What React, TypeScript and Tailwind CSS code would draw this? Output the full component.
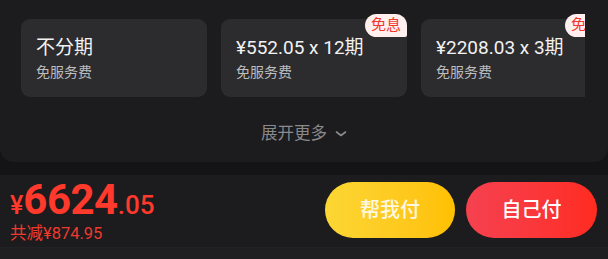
import React from 'react';

interface PlanOption {
  title: string;
  sub: string;
  badge?: string;
}

const plans: PlanOption[] = [
  { title: '不分期', sub: '免服务费' },
  { title: '¥552.05 x 12期', sub: '免服务费', badge: '免息' },
  { title: '¥2208.03 x 3期', sub: '免服务费', badge: '免息' },
];

const font = { fontFamily: 'Roboto, "Noto Sans CJK SC", sans-serif' };

const PlanCard: React.FC<{ plan: PlanOption }> = ({ plan }) => (
  <div className="relative shrink-0 w-[186px] h-[78px] rounded-[9px] bg-[#2c2b2d] pl-[15px] pt-[16px]">
    <div className="text-[19px] leading-[26px] text-[#f2f2f2]">{plan.title}</div>
    <div className="mt-[2px] text-[14px] leading-[18px] text-[#bdbdbd]">{plan.sub}</div>
    {plan.badge && (
      <div className="absolute right-0 top-[-5px] h-[23px] px-[6px] flex items-center bg-[#fff0ef] text-[#f2362c] text-[15px] leading-none rounded-tl-[12px] rounded-tr-[12px] rounded-bl-[12px] rounded-br-[2px]">
        {plan.badge}
      </div>
    )}
  </div>
);

export default function App() {
  return (
    <div className="w-[608px] h-[259px] overflow-hidden bg-[#141315]" style={font}>
      <div className="h-[162px] bg-[#1c1b1d] rounded-b-[14px] pt-[14px] pl-[21px]">
        <div className="w-[564px] pt-[5px] flex gap-[14px] overflow-hidden">
          {plans.map((p) => (
            <PlanCard key={p.title} plan={p} />
          ))}
        </div>
        <div className="mt-[26px] pr-[21px] flex items-center justify-center gap-[8px] text-[16.5px] leading-[22px] text-[#8a898b]">
          <span>展开更多</span>
          <svg width="12" height="8" viewBox="0 0 12 8" fill="none">
            <path d="M1.5 2L6 5.5L10.5 2" stroke="#8a898b" strokeWidth="1.6" strokeLinecap="round" strokeLinejoin="round" />
          </svg>
        </div>
      </div>
      <div className="mt-[13px] h-[72px] bg-[#1c1b1d] flex items-start justify-between pl-[10px] pr-[11px]">
        <div className="pt-[4px] text-[#ff3a2c]">
          <div className="flex items-baseline leading-none">
            <span className="text-[25px] font-medium">¥</span>
            <span className="text-[42px] font-bold tracking-[-0.5px]">6624</span>
            <span className="text-[26px] font-medium">.05</span>
          </div>
          <div className="mt-[3px] text-[16.5px] leading-[20px] text-[#ef3a2e]">共减¥874.95</div>
        </div>
        <div className="pt-[7px] flex gap-[11px]">
          <button className="w-[130px] h-[56px] rounded-full bg-gradient-to-r from-[#fcd633] to-[#ffc000] text-[#fff8e0] text-[20px] font-medium">
            帮我付
          </button>
          <button className="w-[131px] h-[56px] rounded-full bg-gradient-to-r from-[#f5414f] to-[#ff2b1f] text-white text-[20px] font-medium">
            自己付
          </button>
        </div>
      </div>
      <div className="h-[12px] bg-[#1f1e20] border-t border-[#222123]" />
    </div>
  );
}
